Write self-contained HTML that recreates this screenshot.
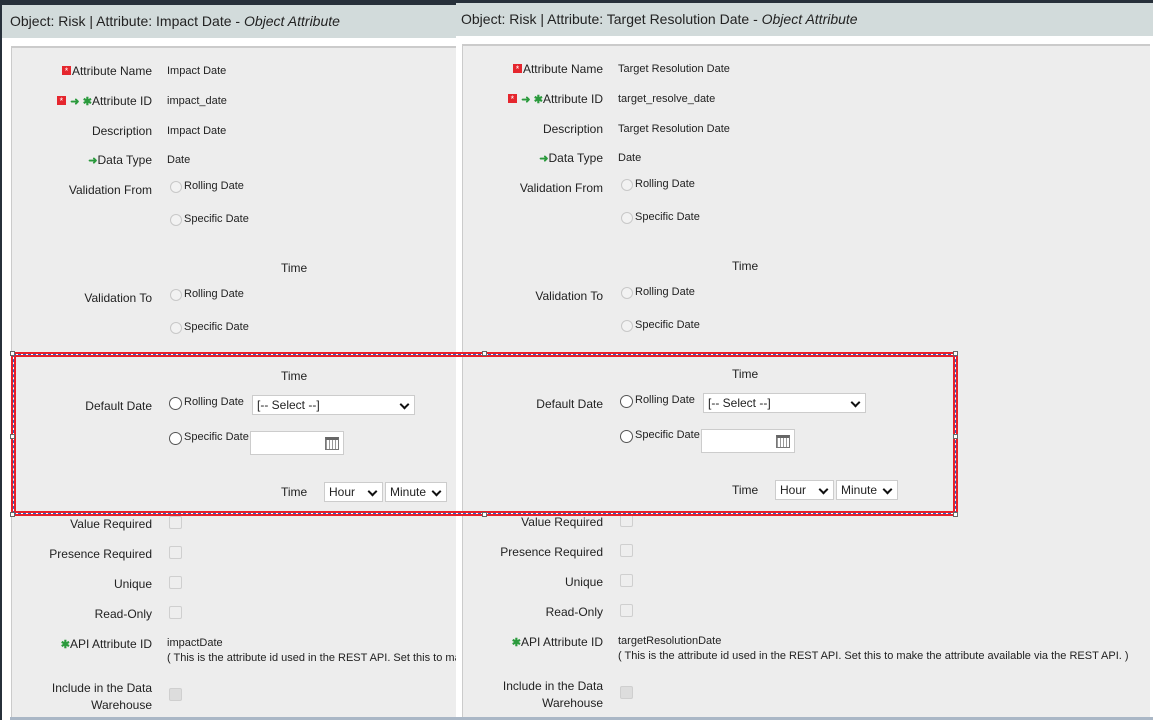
<!DOCTYPE html>
<html><head><meta charset="utf-8"><style>
*{margin:0;padding:0;box-sizing:border-box}
body{width:1153px;height:720px;overflow:hidden;background:#fff;position:relative;font-family:"Liberation Sans",sans-serif;color:#222}
.panel{position:absolute;top:0;height:720px;overflow:hidden;background:#fff}
.in{position:absolute;width:702px;height:725px}
.dark{position:absolute;left:0;top:0;width:100%;height:5px;background:#27303a}
.hdr{position:absolute;left:0;top:5px;width:100%;height:33px;background:#d2dbdb;font-size:14px;line-height:33px;padding-left:10px;color:#222}
.box{position:absolute;left:11px;top:46px;width:688px;height:690px;background:#ededed;border-top:2px solid #cbcbcb;border-left:1px solid #cbcbcb}
.a{position:absolute;font-size:12px;white-space:nowrap}
.l{right:550px;text-align:right}
.v{left:167px;font-size:11px}
.rd{position:absolute;width:12px;height:12px;border:1px solid #c8c8c8;border-radius:50%;background:#f2f2f2}
.rd2{border-color:#555;background:#fff;width:13px;height:13px}
.cb{position:absolute;left:169px;width:13px;height:13px;border:1px solid #cfcfcf;border-radius:2px;background:#eee}
.sel{position:absolute;height:20px;background:#fff;border:1px solid #ccc;font-size:12px;line-height:18px;padding-left:4px}
.sel:after{content:"";position:absolute;right:6px;top:5px;width:5px;height:5px;border-right:2px solid #111;border-bottom:2px solid #111;transform:rotate(45deg)}
.rq{display:inline-block;width:9px;height:9px;background:#e5262e;color:#fff;font-size:9px;line-height:10px;text-align:center;vertical-align:1px;margin-right:1px}
.g{color:#2a9a3c;font-size:11px;font-weight:bold}
.cal{position:absolute;right:4px;top:5px;width:14px;height:13px;border:1px solid #777;border-top:3px solid #666;background:repeating-linear-gradient(90deg,#999 0 1px,#fff 1px 3px),#fff}
.h{position:absolute;width:5px;height:5px;background:#fff;border:1px solid #666}
</style></head><body>

<div class="panel" style="left:0;width:456px;border-left:2px solid #27303a">
<div class="in" style="left:-2px;top:0">
<div class="dark"></div>
<div class="hdr">Object: Risk | Attribute: Impact Date - <i>Object Attribute</i></div>
<div class="box"></div>
<div class="a l" style="top:64px"><span class="rq">*</span>Attribute Name</div><div class="a v" style="top:65px">Impact Date</div>
<div class="a l" style="top:94px"><span class="rq">*</span> <span class="g">➜</span> <span class="g">✱</span>Attribute ID</div><div class="a v" style="top:95px">impact_date</div>
<div class="a l" style="top:124px">Description</div><div class="a v" style="top:125px">Impact Date</div>
<div class="a l" style="top:153px"><span class="g">➜</span>Data Type</div><div class="a v" style="top:154px">Date</div>
<div class="a l" style="top:183px">Validation From</div>
<div class="rd" style="left:170px;top:181px"></div><div class="a" style="left:184px;top:180px;font-size:11px">Rolling Date</div>
<div class="rd" style="left:170px;top:214px"></div><div class="a" style="left:184px;top:213px;font-size:11px">Specific Date</div>
<div class="a" style="left:281px;top:261px">Time</div>
<div class="a l" style="top:291px">Validation To</div>
<div class="rd" style="left:170px;top:289px"></div><div class="a" style="left:184px;top:288px;font-size:11px">Rolling Date</div>
<div class="rd" style="left:170px;top:322px"></div><div class="a" style="left:184px;top:321px;font-size:11px">Specific Date</div>
<div class="a" style="left:281px;top:369px">Time</div>
<div class="a l" style="top:399px">Default Date</div>
<div class="rd rd2" style="left:169px;top:397px"></div><div class="a" style="left:184px;top:396px;font-size:11px">Rolling Date</div>
<div class="sel" style="left:252px;top:395px;width:163px">[-- Select --]</div>
<div class="rd rd2" style="left:169px;top:432px"></div><div class="a" style="left:184px;top:431px;font-size:11px">Specific Date</div>
<div style="position:absolute;left:250px;top:431px;width:94px;height:24px;background:#fff;border:1px solid #ccc"><div class="cal"></div></div>
<div class="a" style="left:281px;top:485px">Time</div>
<div class="sel" style="left:324px;top:482px;width:59px">Hour</div>
<div class="sel" style="left:385px;top:482px;width:62px">Minute</div>
<div class="a l" style="top:517px">Value Required</div><div class="cb" style="top:516px"></div>
<div class="a l" style="top:547px">Presence Required</div><div class="cb" style="top:546px"></div>
<div class="a l" style="top:577px">Unique</div><div class="cb" style="top:576px"></div>
<div class="a l" style="top:607px">Read-Only</div><div class="cb" style="top:606px"></div>
<div class="a l" style="top:637px"><span class="g">✱</span>API Attribute ID</div><div class="a v" style="top:637px">impactDate</div>
<div class="a v" style="top:652px;font-size:11px">( This is the attribute id used in the REST API. Set this to make the attribute available via the REST API. )</div>
<div class="a l" style="top:680px;line-height:17px">Include in the Data<br>Warehouse</div><div class="cb" style="top:688px;background:#ddd"></div>
</div></div>

<div class="panel" style="left:456px;width:697px">
<div class="in" style="left:-5px;top:-2px">
<div class="dark"></div>
<div class="hdr">Object: Risk | Attribute: Target Resolution Date - <i>Object Attribute</i></div>
<div class="box"></div>
<div class="a l" style="top:64px"><span class="rq">*</span>Attribute Name</div><div class="a v" style="top:65px">Target Resolution Date</div>
<div class="a l" style="top:94px"><span class="rq">*</span> <span class="g">➜</span> <span class="g">✱</span>Attribute ID</div><div class="a v" style="top:95px">target_resolve_date</div>
<div class="a l" style="top:124px">Description</div><div class="a v" style="top:125px">Target Resolution Date</div>
<div class="a l" style="top:153px"><span class="g">➜</span>Data Type</div><div class="a v" style="top:154px">Date</div>
<div class="a l" style="top:183px">Validation From</div>
<div class="rd" style="left:170px;top:181px"></div><div class="a" style="left:184px;top:180px;font-size:11px">Rolling Date</div>
<div class="rd" style="left:170px;top:214px"></div><div class="a" style="left:184px;top:213px;font-size:11px">Specific Date</div>
<div class="a" style="left:281px;top:261px">Time</div>
<div class="a l" style="top:291px">Validation To</div>
<div class="rd" style="left:170px;top:289px"></div><div class="a" style="left:184px;top:288px;font-size:11px">Rolling Date</div>
<div class="rd" style="left:170px;top:322px"></div><div class="a" style="left:184px;top:321px;font-size:11px">Specific Date</div>
<div class="a" style="left:281px;top:369px">Time</div>
<div class="a l" style="top:399px">Default Date</div>
<div class="rd rd2" style="left:169px;top:397px"></div><div class="a" style="left:184px;top:396px;font-size:11px">Rolling Date</div>
<div class="sel" style="left:252px;top:395px;width:163px">[-- Select --]</div>
<div class="rd rd2" style="left:169px;top:432px"></div><div class="a" style="left:184px;top:431px;font-size:11px">Specific Date</div>
<div style="position:absolute;left:250px;top:431px;width:94px;height:24px;background:#fff;border:1px solid #ccc"><div class="cal"></div></div>
<div class="a" style="left:281px;top:485px">Time</div>
<div class="sel" style="left:324px;top:482px;width:59px">Hour</div>
<div class="sel" style="left:385px;top:482px;width:62px">Minute</div>
<div class="a l" style="top:517px">Value Required</div><div class="cb" style="top:516px"></div>
<div class="a l" style="top:547px">Presence Required</div><div class="cb" style="top:546px"></div>
<div class="a l" style="top:577px">Unique</div><div class="cb" style="top:576px"></div>
<div class="a l" style="top:607px">Read-Only</div><div class="cb" style="top:606px"></div>
<div class="a l" style="top:637px"><span class="g">✱</span>API Attribute ID</div><div class="a v" style="top:637px">targetResolutionDate</div>
<div class="a v" style="top:652px;font-size:11px">( This is the attribute id used in the REST API. Set this to make the attribute available via the REST API. )</div>
<div class="a l" style="top:680px;line-height:17px">Include in the Data<br>Warehouse</div><div class="cb" style="top:688px;background:#ddd"></div>
</div></div>

<div style="position:absolute;left:11px;top:352px;width:947px;height:164px;border:2px solid #e8202a">
<div style="position:absolute;inset:0;border:1px solid #fff"></div>
<div style="position:absolute;inset:0;border:1px dashed #2a62c8"></div>
<div style="position:absolute;inset:1px;border:2px solid #e8202a"></div>
</div>
<div class="h" style="left:10px;top:351px"></div>
<div class="h" style="left:10px;top:434px"></div>
<div class="h" style="left:10px;top:512px"></div>
<div class="h" style="left:482px;top:351px"></div>
<div class="h" style="left:482px;top:512px"></div>
<div class="h" style="left:953px;top:351px"></div>
<div class="h" style="left:953px;top:434px"></div>
<div class="h" style="left:953px;top:512px"></div>
<div style="position:absolute;left:10px;top:717px;width:1143px;height:3px;background:#aab7c6"></div>
</body></html>
